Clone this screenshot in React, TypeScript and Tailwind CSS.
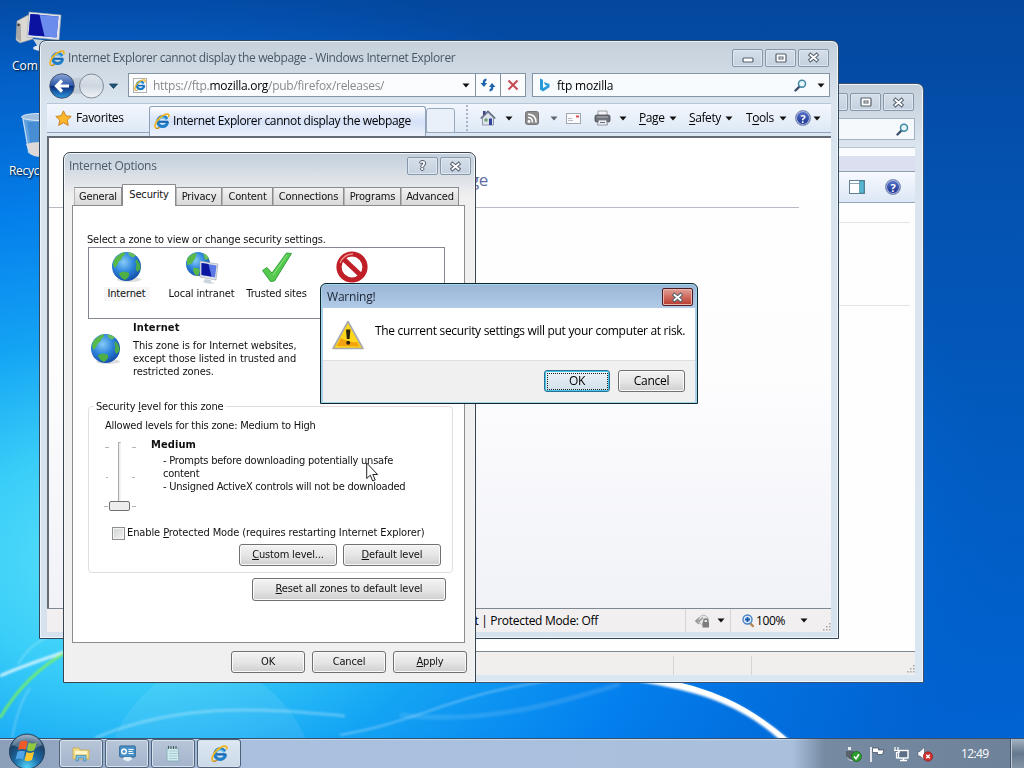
import type { ReactNode } from "react";
import clsx from "clsx";

const UI = "font-['Open_Sans','Noto_Sans',sans-serif] [font-stretch:normal]";
const TAHOMA = "font-['DejaVu_Sans_Condensed','DejaVu_Sans',sans-serif] [font-stretch:condensed]";

const ZONES = [
  { name: "Internet", icon: <Globe />, active: true },
  { name: "Local intranet", icon: <IntranetIcon />, active: false },
  { name: "Trusted sites", icon: <CheckMark />, active: false },
  { name: "Restricted sites", icon: <NoEntry />, active: false },
];

const TABS = [
  { name: "General", width: "w-[48px]" },
  { name: "Security", width: "w-[54px]" },
  { name: "Privacy", width: "w-[46px]" },
  { name: "Content", width: "w-[51px]" },
  { name: "Connections", width: "w-[71px]" },
  { name: "Programs", width: "w-[57px]" },
  { name: "Advanced", width: "w-[58px]" },
];

export default function App() {
  return (
    <div className={clsx("relative h-[768px] w-[1024px] overflow-hidden bg-[#0650ad] text-[12px] text-black", UI)}>
      <Wallpaper />

      <div className="absolute left-[15px] top-[10px]"><ComputerIcon /></div>
      <span className="absolute left-[12px] top-[58px] leading-4 text-white [text-shadow:1px_1px_2px_#000]">Computer</span>
      <div className="absolute left-[19px] top-[112px]"><BinIcon /></div>
      <span className="absolute left-[9px] top-[163px] tracking-[-0.3px] leading-4 text-white [text-shadow:1px_1px_2px_#000]">Recycle Bin</span>

      <ExplorerWindow />
      <BrowserWindow />
      <OptionsDialog />
      <WarningDialog />

      <svg className="absolute left-[366px] top-[462px]" width="13" height="21" viewBox="0 0 13 21">
        <path d="M.7 1v15.5l3.6-3.3 2.4 5.8 2.5-1.1-2.4-5.4h4.8z" fill="#fff" stroke="#222" />
      </svg>

      <Taskbar />
    </div>
  );
}

/* ---------- desktop ---------- */

function Wallpaper() {
  return (
    <svg className="absolute inset-0" width="1024" height="768" viewBox="0 0 1024 768">
      <defs>
        <linearGradient id="sky" x1="0" y1="0" x2="0" y2="1">
          <stop offset="0" stopColor="#04479f" />
          <stop offset=".25" stopColor="#0452b0" />
          <stop offset=".6" stopColor="#025bc0" />
          <stop offset="1" stopColor="#0064d4" />
        </linearGradient>
        <radialGradient id="glow" gradientUnits="userSpaceOnUse" cx="130" cy="560" r="880" gradientTransform="translate(0 185) scale(1 .67)">
          <stop offset="0" stopColor="#5fe3fb" />
          <stop offset=".2" stopColor="#38cdf8" />
          <stop offset=".38" stopColor="#14a4f4" />
          <stop offset=".6" stopColor="#0484f2" stopOpacity=".9" />
          <stop offset=".85" stopColor="#036fe0" stopOpacity=".5" />
          <stop offset="1" stopColor="#025fc8" stopOpacity="0" />
        </radialGradient>
        <filter id="soft"><feGaussianBlur stdDeviation="1" /></filter>
      </defs>
      <rect width="1024" height="768" fill="url(#sky)" />
      <rect width="1024" height="768" fill="url(#glow)" />
      <path d="M112 745C124 710 150 678 200 660C250 665 292 700 308 745Z" fill="#fff" opacity=".08" />
      <g fill="none" stroke="#fff" filter="url(#soft)">
        <path d="M0 676C22 666 42 660 70 650" strokeWidth="3" opacity=".75" />
        <path d="M18 664C28 648 38 641 50 636M12 738C16 716 22 700 30 688" strokeWidth="1.5" opacity=".3" />
        <path d="M0 718C14 694 36 668 70 650" stroke="#7df25a" strokeWidth="2.4" />
        <path d="M95 738C180 702 260 708 345 716" strokeWidth="3" opacity=".28" />
        <path d="M340 735C420 722 460 690 560 680" strokeWidth="2" opacity=".3" />
        <path d="M400 715C480 724 550 706 620 684" strokeWidth="5" opacity=".12" />
      </g>
      <path d="M640 676C705 686 748 704 792 742L782 742C745 708 705 692 640 682Z" fill="#fff" filter="url(#soft)" />
      <path d="M652 679C708 688 748 706 788 742" fill="none" stroke="#fff" strokeWidth="4" />
    </svg>
  );
}

function ComputerIcon() {
  return (
    <svg width="48" height="42" viewBox="0 0 48 42">
      <path d="M2 11l11-6 5 3v21L5 33 1 30z" fill="#d9d8d2" stroke="#8f9296" strokeWidth=".6" />
      <path d="M2 12v17l4 3V14z" fill="#a8a9a6" />
      <circle cx="3.5" cy="15" r="1.2" fill="#333" />
      <path d="M18 29l20 2-1 7-13 1z" fill="#c9d3dc" />
      <path d="M14 2l32 3-2 25-32-3z" fill="#e2e6ea" stroke="#9ba5b0" strokeWidth=".6" />
      <path d="M15.5 4l28 2.500-2 21-28-2.500z" fill="#1d35c9" />
      <path d="M23 5l20.500 1.500-2 21-12-1z" fill="#6b8ced" />
      <path d="M15.500 4l9 .800 5 21.500-16-1.300z" fill="#0b12a0" />
      <ellipse cx="27" cy="38" rx="9" ry="3" fill="#dfe6ec" />
    </svg>
  );
}

function BinIcon() {
  return (
    <svg width="42" height="48" viewBox="0 0 42 48">
      <path d="M3 5l6 36q12 8 23 0l6-36z" fill="#82b5e4" opacity=".75" />
      <path d="M8 10h24l-4 25H12z" fill="#3c85cf" opacity=".7" />
      <path d="M7 32q14-4 26 0l-2 10q-10 6-20 0z" fill="#ded9d8" />
      <ellipse cx="20.500" cy="5" rx="18" ry="3.500" fill="#9fbddd" stroke="#dfeaf5" />
      <path d="M4 7l6 34" stroke="#cfe2f5" />
    </svg>
  );
}

/* ---------- shared window parts ---------- */

function CaptionButton({ children, red }: { children: ReactNode; red?: boolean }) {
  return (
    <div
      className={clsx(
        "flex h-[18px] w-[31px] items-center justify-center rounded-[2px] border",
        red
          ? "border-[#4c1c22] bg-linear-to-b from-[#e0a097] via-[#cf6a5e] to-[#b8392d] shadow-[inset_0_0_0_1px_#e9b5ad]"
          : "border-[#8796a8] bg-linear-to-b from-[#d5dfe9] to-[#c5d1df] shadow-[inset_0_0_0_1px_#dfe8f0]"
      )}
    >
      {children}
    </div>
  );
}

function CloseGlyph() {
  return (
    <svg width="13" height="11" viewBox="0 0 13 11">
      <path d="M3.500 3l6 5M9.500 3l-6 5" stroke="#56616f" strokeWidth="3.800" strokeLinecap="square" />
      <path d="M3.500 3l6 5M9.500 3l-6 5" stroke="#fff" strokeWidth="1.900" strokeLinecap="square" />
    </svg>
  );
}

function MaxGlyph() {
  return (
    <svg width="12" height="10" viewBox="0 0 12 10">
      <rect x="1" y="1" width="10" height="8" rx="1" fill="#fff" stroke="#56616f" strokeWidth="1.200" />
      <rect x="4" y="4" width="4" height="2" fill="#fff" stroke="#56616f" />
    </svg>
  );
}

function MinGlyph() {
  return (
    <svg width="12" height="10" viewBox="0 0 12 10">
      <rect x="1" y="5" width="10" height="4" rx="1" fill="#fff" stroke="#56616f" strokeWidth="1.200" />
    </svg>
  );
}

function Arrow({ className = "text-[#111]" }: { className?: string }) {
  return (
    <svg className={className} width="8" height="5" viewBox="0 0 8 5">
      <path d="M.5.5h7L4 4.500z" fill="currentColor" />
    </svg>
  );
}

function Magnifier() {
  return (
    <svg width="13" height="13" viewBox="0 0 13 13">
      <path d="M1.500 11.500l4-4" stroke="#3c4f68" strokeWidth="2.400" strokeLinecap="round" />
      <circle cx="8" cy="4.800" r="3.500" fill="#e6f6fb" stroke="#3f87a3" strokeWidth="1.500" />
    </svg>
  );
}

function HelpBadge() {
  return (
    <span className="flex h-4 w-4 shrink-0 items-center justify-center rounded-full border border-[#7f8fb4] bg-linear-to-b from-[#5a77cb] to-[#1c2f8f] text-[11px] leading-none font-bold text-white shadow-[inset_0_0_0_1px_#a9b8e0]">
      ?
    </span>
  );
}

function Grip() {
  return (
    <svg width="9" height="9" viewBox="0 0 9 9" fill="#a5a5a5">
      <path d="M7 1h1.500v1.500H7zM4 4h1.500v1.500H4zM7 4h1.500v1.500H7zM1 7h1.500v1.500H1zM4 7h1.500v1.500H4zM7 7h1.500v1.500H7z" />
    </svg>
  );
}

function IELogo({ size = 16 }: { size?: number }) {
  return (
    <svg width={size} height={size} viewBox="0 0 16 16" fill="none">
      <circle cx="8.600" cy="8.600" r="4.900" stroke="#1f7fc9" strokeWidth="3.200" strokeDasharray="27.500 3.300" />
      <path d="M5 6.500q3.500-3.800 7 0" stroke="#71c9f2" strokeWidth="1.400" />
      <path d="M5 8.800h9" stroke="#1769b5" strokeWidth="2.200" />
      <path d="M2 15.200C-.8 13 3.500 4.800 9.500 2.200C13.500.3 15.800 1 14.600 4.200" stroke="#efb41f" strokeWidth="1.700" />
      <path d="M2 15.200C3 15.800 4.600 15 5.600 14.200" stroke="#c9870e" strokeWidth="1.200" />
    </svg>
  );
}

function PushButton({ children, className }: { children: ReactNode; className?: string }) {
  return (
    <div
      className={clsx(
        "flex h-[22px] shrink-0 items-center justify-center rounded-[3px] border border-[#707070] bg-linear-to-b from-[#f3f3f3] via-[#e6e6e6] to-[#cfcfcf] whitespace-nowrap shadow-[inset_0_0_0_1px_#fafafa]",
        className
      )}
    >
      <span>{children}</span>
    </div>
  );
}

/* ---------- background explorer window ---------- */

function ExplorerWindow() {
  return (
    <div className="absolute left-[124px] top-[83px] flex h-[600px] w-[800px] flex-col rounded-t-[7px] border border-[#3e536b] bg-linear-to-b from-[#c3ced9] via-[#dbe5ef] via-10% to-[#dae6f2] pr-[8px] pb-[7px] pl-[7px] shadow-[inset_0_0_0_1px_#eef4fa]">
      <div className="flex h-[34px] shrink-0 items-center justify-end gap-[2px] pt-[2px] pr-px">
        <CaptionButton><MinGlyph /></CaptionButton>
        <CaptionButton><MaxGlyph /></CaptionButton>
        <CaptionButton><CloseGlyph /></CaptionButton>
      </div>
      <div className="flex h-[22px] shrink-0 items-center justify-end border border-[#a3b3c3] bg-[#f6f9fc] pr-[5px]">
        <Magnifier />
      </div>
      <div className="mt-[7px] h-[9px] shrink-0 border-t border-[#b6c4d2] bg-[#fafbfe]" />
      <div className="h-[16px] shrink-0 border-b border-[#8f9fb2] bg-[#dcdff0]" />
      <div className="flex h-[31px] shrink-0 items-center justify-end border-b border-[#93a6bc] bg-linear-to-b from-[#f7faff] to-[#dce7f5] pr-[14px]">
        <svg className="mr-[20px]" width="16" height="14" viewBox="0 0 16 14">
          <rect x=".5" y=".5" width="15" height="13" fill="#fff" stroke="#5f7f97" />
          <path d="M1 3.500h10" stroke="#8ea6b8" />
          <path d="M10.500 1h4.500v12h-4.500z" fill="#57b6cf" stroke="#3f7f99" strokeWidth=".6" />
        </svg>
        <HelpBadge />
      </div>
      <div className="flex grow flex-col bg-[#fefefe] pr-[5px]">
        <div className="h-[20px] border-b border-[#e3e3e6]" />
        <div className="h-[83px] border-b border-[#e3e3e6]" />
      </div>
      <div className="flex h-[24px] shrink-0 items-end border-t border-[#7f8791] bg-[#f1efee]">
        <div className="h-[19px] w-[542px] border-r border-[#d6d3d1]" />
        <div className="h-[19px] w-[78px] border-r border-[#d6d3d1]" />
        <div className="ml-auto pb-[2px]"><Grip /></div>
      </div>
    </div>
  );
}

/* ---------- Internet Explorer ---------- */

function BrowserWindow() {
  return (
    <div className="absolute left-[39px] top-[40px] flex h-[599px] w-[800px] flex-col rounded-t-[7px] border border-[#33475c] bg-linear-to-b from-[#c5d0da] via-[#d9e4ee] via-10% to-[#d6e2ee] px-[7px] pb-[6px] shadow-[inset_0_0_0_1px_#edf4fa]">
      <div className="flex h-[32px] shrink-0 items-center pt-px pl-[2px] pr-[2px]">
        <IELogo />
        <span className="ml-[3px] tracking-[-0.37px] text-[#4a5766]">
          Internet Explorer cannot display the webpage - Windows Internet Explorer
        </span>
        <div className="ml-auto flex gap-[2px]">
          <CaptionButton><MinGlyph /></CaptionButton>
          <CaptionButton><MaxGlyph /></CaptionButton>
          <CaptionButton><CloseGlyph /></CaptionButton>
        </div>
      </div>

      <div className="flex h-[24px] shrink-0 items-center">
        <NavButtons />
        <div className="ml-[7px] flex h-[24px] w-[398px] shrink-0 items-center border border-[#8494a5] bg-[#fafcfe]">
          <span className="ml-[4px] flex h-[15px] w-[14px] items-center justify-center border border-[#b2b2b2] bg-white">
            <IELogo size={12} />
          </span>
          <span className="ml-[6px] pt-px tracking-[-0.27px] text-[#8a8a8a]">
            https://ftp.<span className="text-black">mozilla.org</span>/pub/firefox/releases/
          </span>
          <span className="mr-[5px] ml-auto"><Arrow /></span>
          <span className="flex h-full w-[25px] items-center justify-center border-l border-[#8494a5]">
            <svg width="16" height="14" viewBox="0 0 16 14" fill="#1e63ae">
              <path d="M6.500.5Q2.500.8 2.700 5H.5L4 9l3-4H5Q5 3 6.500 2.500z" />
              <path d="M9.500 13.500q4-.3 3.800-4.500h2.200L12 5 9 9h2q0 2-1.500 2.500z" />
            </svg>
          </span>
          <span className="flex h-full w-[25px] items-center justify-center border-l border-[#8494a5]">
            <svg width="12" height="12" viewBox="0 0 12 12">
              <path d="M1.500 1.500l9 9M10.500 1.500l-9 9" stroke="#c44a50" strokeWidth="2" />
            </svg>
          </span>
        </div>
        <div className="ml-[6px] flex h-[24px] w-[298px] shrink-0 items-center border border-[#8494a5] bg-[#f8fbfd]">
          <svg className="ml-[6px]" width="11" height="15" viewBox="0 0 11 15">
            <path d="M1 .5l3 1.200v8.300l4-2.300-2-.9L4.800 4 10.500 6v3.200L4 13.500 1 11.500z" fill="#2b9bd8" />
          </svg>
          <span className="ml-[7px] pt-px tracking-[-0.2px]">ftp mozilla</span>
          <span className="mr-[10px] ml-auto"><Magnifier /></span>
          <span className="mr-[4px]"><Arrow /></span>
        </div>
      </div>

      <div className="mt-[6px] flex h-[33px] shrink-0 border-t border-[#b7c6d6] bg-linear-to-b from-[#f3f7fd] to-[#dbe6f5]">
        <div className="flex h-[29px] w-[102px] shrink-0 items-center border-b border-[#93a4ba] pl-[8px]">
          <svg width="17" height="16" viewBox="0 0 17 16">
            <path d="M8.500.8l2.300 5 5.400.6-4 3.700 1.100 5.300-4.800-2.700-4.800 2.700 1.100-5.300-4-3.700 5.400-.6z" fill="#fcb72a" stroke="#c97a16" strokeWidth=".9" />
          </svg>
          <span className="ml-[4px] tracking-[-0.35px]">Favorites</span>
        </div>
        <div className="mt-[2px] flex h-[31px] w-[277px] shrink-0 items-center rounded-t-[3px] border border-b-0 border-[#8fa1b8] bg-linear-to-b from-[#fbfcff] via-[#d5e1f8] to-[#eef3fc] pb-[3px] pl-[4px]">
          <IELogo />
          <span className="ml-[3px] tracking-[-0.38px] whitespace-nowrap">Internet Explorer cannot display the webpage</span>
        </div>
        <div className="flex h-[29px] grow items-center border-b border-[#93a4ba]">
          <div className="mt-[4px] h-[25px] w-[29px] rounded-t-[3px] rounded-b-[2px] border border-[#98a9be] bg-[#e9f0fa]" />
          <div className="ml-[11px] h-[26px] border-l-2 border-dotted border-[#a8b3c3]" />
          <div className="ml-[12px] flex w-[33px] items-center justify-between"><HomeIcon /><Arrow /></div>
          <div className="ml-[12px] flex w-[33px] items-center justify-between">
            <svg width="14" height="14" viewBox="0 0 14 14">
              <rect x=".5" y=".5" width="13" height="13" rx="2" fill="#8c8c8c" stroke="#777" />
              <circle cx="4" cy="10.500" r="1.400" fill="#fff" />
              <path d="M3 6.500q4.500 0 4.500 5M3 3.200q8 0 8 8.300" fill="none" stroke="#fff" strokeWidth="1.500" />
            </svg>
            <Arrow className="text-[#5c646f]" />
          </div>
          <svg className="ml-[8px]" width="15" height="11" viewBox="0 0 15 11">
            <rect x=".5" y=".5" width="14" height="10" fill="#fbfbfb" stroke="#a2a7b4" />
            <path d="M10 2.500h3v2h-3z" fill="#d94c50" />
            <path d="M2 7.500h5M2 5.500h4" stroke="#b6bac6" />
          </svg>
          <div className="ml-[13px] flex w-[33px] items-center justify-between"><PrinterIcon /><Arrow /></div>
          <MenuItem className="ml-[12px] w-[38px]" hot="P" rest="age" />
          <MenuItem className="ml-[12px] w-[44px]" hot="S" rest="afety" />
          <MenuItem className="ml-[13px] w-[41px]" pre="T" hot="o" rest="ols" />
          <div className="ml-[8px] flex w-[26px] items-center justify-between"><HelpBadge /><Arrow /></div>
        </div>
      </div>

      <div className="flex grow border-t-2 border-l-2 border-[#646b75] bg-linear-to-b from-white via-[#fdfdfe] to-[#f1f2f8]">
        {/* error page heading, mostly behind the options dialog */}
        <div className="flex h-[70px] w-[750px] items-end justify-end border-b border-[#b9bbc4] pb-[15px] pr-[311px]">
          <span className="text-[17px] tracking-[-0.4px] text-[#5d6da0]">Internet Explorer cannot display the webpage</span>
        </div>
      </div>

      <div className="flex h-[24px] shrink-0 items-center border-t border-[#7f8791] bg-[#f1efef]">
        <div className="flex h-full w-[639px] items-center justify-end border-r border-[#d6d3d6] pr-[87px]">
          <span className="tracking-[-0.3px]">Internet | Protected Mode: Off</span>
        </div>
        <div className="flex h-full w-[45px] items-center justify-between border-r border-[#d6d3d6] pr-[5px] pl-[9px]">
          <svg width="15" height="14" viewBox="0 0 15 14">
            <circle cx="8.500" cy="6" r="4.800" fill="#e9e9e9" stroke="#b2b2b2" />
            <path d="M8 3.500L4.500 7H1M4 4L1 7l3 3" fill="none" stroke="#9a9a9a" strokeWidth="1.600" />
            <path d="M8.800 8.500V7a2 2 0 014 0v1.500" fill="none" stroke="#777" strokeWidth="1.300" />
            <rect x="7.500" y="8" width="6.500" height="5.500" fill="#7d7d7d" />
          </svg>
          <Arrow />
        </div>
        <svg className="ml-[11px]" width="13" height="14" viewBox="0 0 13 14">
          <path d="M8 9l3.500 3.800" stroke="#b58352" strokeWidth="2.400" />
          <circle cx="5.500" cy="5.500" r="4.500" fill="#dcecfb" stroke="#4a83c4" strokeWidth="1.400" />
          <path d="M5.500 3v5M3 5.500h5" stroke="#1757b0" strokeWidth="1.800" />
        </svg>
        <span className="ml-px w-[44px] tracking-[-0.4px]">100%</span>
        <Arrow />
        <div className="ml-auto self-end pb-[1px]"><Grip /></div>
      </div>
    </div>
  );
}

function NavButtons() {
  return (
    <svg className="mt-[1px] ml-[2px] -my-[2px] shrink-0" width="72" height="27" viewBox="0 0 72 27">
      <defs>
        <linearGradient id="back" x1="0" y1="0" x2="0" y2="1">
          <stop offset="0" stopColor="#8ea7d8" />
          <stop offset=".48" stopColor="#2c56a8" />
          <stop offset=".52" stopColor="#0d2c7d" />
          <stop offset="1" stopColor="#2c9be0" />
        </linearGradient>
        <linearGradient id="fwd" x1="0" y1="0" x2="0" y2="1">
          <stop offset="0" stopColor="#dfe5ec" />
          <stop offset=".5" stopColor="#cdd6e0" />
          <stop offset="1" stopColor="#f1f5f9" />
        </linearGradient>
      </defs>
      <path d="M13 3q14 4 29 0v20q-15-5-29 0z" fill="#c1ccd8" />
      <circle cx="13" cy="13" r="12.200" fill="url(#back)" stroke="#41526f" />
      <circle cx="42.500" cy="13" r="12" fill="url(#fwd)" stroke="#7e8a98" />
      <path d="M20 13H8M13 7.500L7.500 13l5.500 5.500" fill="none" stroke="#fff" strokeWidth="3.200" />
      <path d="M60.500 11h8l-4 4.500z" fill="#1e5779" stroke="#123c5a" strokeWidth=".8" />
    </svg>
  );
}

function HomeIcon() {
  return (
    <svg width="16" height="16" viewBox="0 0 16 16">
      <path d="M3 1h2.500v4H3z" fill="#3b3b86" />
      <path d="M2.500 8v7h11V8L8 2.500z" fill="#dfe3ee" stroke="#7c8597" strokeWidth=".8" />
      <path d="M.7 8.500L8 1.300l7.300 7.200" fill="none" stroke="#5d6883" strokeWidth="1.500" />
      <path d="M9 8.500h3V15H9z" fill="#3442a0" />
      <path d="M4.500 8.500h3v3h-3z" fill="#6ea06a" />
    </svg>
  );
}

function PrinterIcon() {
  return (
    <svg width="17" height="16" viewBox="0 0 17 16">
      <path d="M4 1h9v5H4z" fill="#f5f5f5" stroke="#888" strokeWidth=".8" />
      <rect x="1" y="5" width="15" height="7" rx="1.500" fill="#6d7177" stroke="#484c52" strokeWidth=".8" />
      <path d="M3 7h11" stroke="#b8bcc2" />
      <path d="M4.500 10h8l1 5h-10z" fill="#eef2f6" stroke="#7b828b" strokeWidth=".8" />
      <path d="M6 12.500h5" stroke="#5e6b7a" />
    </svg>
  );
}

function MenuItem({ pre, hot, rest, className }: { pre?: string; hot: string; rest: string; className?: string }) {
  return (
    <div className={clsx("flex items-center justify-between tracking-[-0.4px]", className)}>
      <span>{pre}<u className="underline-offset-2">{hot}</u>{rest}</span>
      <Arrow />
    </div>
  );
}

/* ---------- Internet Options ---------- */

function OptionsDialog() {
  return (
    <div className={clsx("absolute left-[63px] top-[152px] flex h-[531px] w-[413px] flex-col rounded-t-[7px] border border-[#3a444e] bg-[#f0f0f0] bg-linear-to-b from-[#c2cfdc] to-[#f0f0f0] to-[44px] text-[11px] tracking-[-0.16px] text-[#111] shadow-[inset_0_0_0_1px_#f4f7fa]", TAHOMA)}>
      <div className="flex h-[31px] shrink-0 items-start pt-[4px] pr-[4px] pl-[5px]">
        <span className={clsx("text-[12px] leading-[18px] tracking-[-0.3px] text-[#4c5a69]", UI)}>Internet Options</span>
        <div className="ml-auto flex gap-[2px]">
          <CaptionButton>
            <span className="text-[12px] leading-none font-bold text-white [text-shadow:1px_0_#4d5866,-1px_0_#4d5866,0_1px_#4d5866,0_-1px_#4d5866]">?</span>
          </CaptionButton>
          <CaptionButton><CloseGlyph /></CaptionButton>
        </div>
      </div>

      <div className="flex h-[21px] shrink-0 items-end pl-[10px]">
        {TABS.map((t) => (
          <div
            key={t.name}
            className={clsx(
              "flex shrink-0 items-center justify-center border border-b-0 border-[#8a8c90]",
              t.width,
              t.name === "Security"
                ? "relative z-10 -mb-px h-[22px] bg-white pb-px"
                : "h-[18px] border-l-[#b5b5b5] bg-linear-to-b from-[#f2f2f2] to-[#d9d9d9] pt-px"
            )}
          >
            {t.name}
          </div>
        ))}
      </div>

      <div className="ml-[8px] h-[438px] w-[393px] shrink-0 border border-[#8a8c90] bg-white pt-[27px]">
        <p className="ml-[14px] h-[14px] leading-[14px]">Select a zone to view or change security settings.</p>
        <div className="ml-[15px] flex h-[72px] w-[357px] overflow-hidden border border-[#828790] bg-white pt-[3px]">
          {ZONES.map((z) => (
            <div key={z.name} className="flex w-[75px] shrink-0 flex-col items-center text-center">
              <div className="h-[36px]">{z.icon}</div>
              <span
                className={clsx(
                  "px-1 leading-[14px]",
                  z.active && "bg-[#f6f6f6]",
                  z.name === "Restricted sites" ? "w-[62px]" : "whitespace-nowrap"
                )}
              >
                {z.name}
              </span>
            </div>
          ))}
        </div>

        <div className="flex h-[87px] pt-[2px] pl-[17px]">
          <div className="mt-[12px] w-[43px] shrink-0"><Globe /></div>
          <div>
            <p className="leading-[14px] font-bold tracking-[0.12px]">Internet</p>
            <p className="mt-[4px] w-[190px] leading-[13px] tracking-[-0.1px]">
              This zone is for Internet websites,<br />except those listed in trusted and<br />restricted zones.
            </p>
          </div>
        </div>

        <div className="ml-[15px] h-[167px] w-[365px] rounded-[4px] border border-[#dfdfe2]">
          <p className="-mt-[7px] ml-[5px] h-[14px] w-fit bg-white px-[2px] leading-[14px]">Security <u>l</u>evel for this zone</p>
          <p className="mt-[5px] ml-[16px] h-[19px] leading-[14px] tracking-[-0.22px]">Allowed levels for this zone: Medium to High</p>
          <div className="flex h-[88px]">
            <svg className="mt-[3px] ml-[15px]" width="32" height="74" viewBox="0 0 32 74">
              <path d="M1 6.500h4M28 6.500h4M2 36.500h2M28 36.500h3M0 65.500h4M28 65.500h4" stroke="#b5b5b5" />
              <path d="M14.500 1.500h2v60h-2z" fill="#eee" stroke="#aaa" />
              <path d="M16.500 2v60" stroke="#f4f4f4" />
              <rect x="5.500" y="60.500" width="20" height="9" rx="1.500" fill="#ededed" stroke="#707070" />
            </svg>
            <div className="ml-[15px]">
              <p className="leading-[14px] font-bold tracking-[0.1px]">Medium</p>
              <p className="mt-[2px] ml-[12px] leading-[13px] tracking-[-0.23px] whitespace-nowrap">
                - Prompts before downloading potentially unsafe<br />content<br />- Unsigned ActiveX controls will not be downloaded
              </p>
            </div>
          </div>
          <div className="ml-[23px] flex h-[14px] items-center gap-[2px]">
            <span className="h-[13px] w-[13px] shrink-0 border border-[#8e8f8f] bg-linear-to-br from-[#cfd0d2] to-[#f4f4f4] shadow-[inset_0_0_0_1px_#f4f4f4]" />
            <span className="tracking-[-0.1px] whitespace-nowrap">Enable <u>P</u>rotected Mode (requires restarting Internet Explorer)</span>
          </div>
          <div className="mt-[4px] flex justify-end gap-[6px] pr-[11px]">
            <PushButton className="w-[98px]"><u>C</u>ustom level...</PushButton>
            <PushButton className="w-[98px]"><u>D</u>efault level</PushButton>
          </div>
        </div>

        <div className="mt-[5px] flex justify-end pr-[18px]">
          <PushButton className="h-[23px] w-[194px]"><u>R</u>eset all zones to default level</PushButton>
        </div>
      </div>

      <div className="flex gap-[7px] pt-[8px] pl-[167px]">
        <PushButton className="w-[74px]">OK</PushButton>
        <PushButton className="w-[74px]">Cancel</PushButton>
        <PushButton className="w-[74px]"><u>A</u>pply</PushButton>
      </div>
    </div>
  );
}

function Globe() {
  return (
    <svg width="32" height="32" viewBox="0 0 32 32">
      <defs>
        <radialGradient id="sea" cx=".4" cy=".35" r=".7">
          <stop offset="0" stopColor="#86cbf7" />
          <stop offset=".5" stopColor="#2f86dc" />
          <stop offset="1" stopColor="#1149a6" />
        </radialGradient>
      </defs>
      <ellipse cx="18" cy="28.500" rx="12" ry="2.500" fill="#bbb" opacity=".5" />
      <circle cx="15.500" cy="15.500" r="14.500" fill="url(#sea)" />
      <path d="M3 9q4-6 11-8 0 4-3 5 0 3-3 4-2 5-4 7-3-2-1-8z" fill="#58b947" />
      <path d="M8 22q5-3 10 0 1 4-4 7-5-2-6-7z" fill="#4eb044" />
      <path d="M25 8q5 4 4.500 10l-3 3q-3-4-1-7-2-3-.5-6z" fill="#4bab4a" />
      <path d="M17 1.500q5 0 8 3l-3 2q-4-1-5-5z" fill="#66bd5c" />
    </svg>
  );
}

function IntranetIcon() {
  return (
    <svg width="34" height="34" viewBox="0 0 34 34">
      <circle cx="13" cy="13" r="12" fill="url(#sea)" />
      <path d="M2 8q4-6 10-6l-2 6-4 5-4 1zM8 17q4-1 7 2l-2 6q-5-1-5-8z" fill="#58b947" />
      <path d="M18 2q5 2 6 6l-4 1z" fill="#66bd5c" />
      <path d="M15 10l18 3-2 16-16-3z" fill="#e2e5e9" stroke="#9aa3ad" strokeWidth=".6" />
      <path d="M16.500 12l15 2.500-1.500 12-13.500-2.500z" fill="#5b78e6" />
      <path d="M16.500 12l7 1 3 12.500-10-1.500z" fill="#0c16a0" />
      <path d="M20 28l6 1v2l4 1q-6 2-12-1z" fill="#cdd5dc" />
    </svg>
  );
}

function CheckMark() {
  return (
    <svg width="32" height="32" viewBox="0 0 32 32">
      <path d="M1.500 19.500l4.500-3 5 5.500L25.500 2l5 .5-17 27.500-4 .5z" fill="#55c94d" stroke="#2c9a34" strokeWidth=".9" />
      <path d="M12 24L26 4" stroke="#8fe484" />
    </svg>
  );
}

function NoEntry() {
  return (
    <svg width="32" height="32" viewBox="0 0 32 32" fill="none">
      <circle cx="16" cy="16" r="13" fill="#fff" stroke="#c01f28" strokeWidth="5.200" />
      <path d="M7 7.500l18 17" stroke="#c01f28" strokeWidth="5" />
      <path d="M4 12q4-9 13-9" stroke="#ee8a8c" strokeWidth="1.300" />
    </svg>
  );
}

/* ---------- Warning ---------- */

function WarningDialog() {
  return (
    <div className="absolute left-[320px] top-[283px] flex h-[121px] w-[378px] flex-col rounded-t-[6px] border border-[#10232f] bg-linear-to-b from-[#9ab5d6] to-[#b3cdea] to-[26px] p-px shadow-[inset_0_0_0_1px_#9fd8e8]">
      <div className="flex h-[23px] shrink-0 items-center pt-px pr-[3px] pl-[5px]">
        <span className="tracking-[-0.2px] text-[#1c2433]">Warning!</span>
        <div className="ml-auto"><CaptionButton red><CloseGlyph /></CaptionButton></div>
      </div>
      <div className="mx-px flex h-[52px] shrink-0 bg-white pl-[9px]">
        <svg className="mt-[12px] shrink-0" width="32" height="31" viewBox="0 0 32 31">
          <path d="M16 1.500L31 28.500H1z" fill="#fbd21a" stroke="#a7aab0" strokeWidth="1.600" strokeLinejoin="round" />
          <path d="M16 4.500L28.500 27h-25z" fill="#ffd81e" />
          <path d="M4.500 26L9 18q9 5 16 4l2.500 4.500z" fill="#f3a312" />
          <path d="M14 9.500h4.400l-.8 9.500h-2.800z" fill="#2a240f" />
          <circle cx="16.200" cy="22.800" r="2" fill="#2a240f" />
        </svg>
        <span className="mt-[14px] ml-[11px] leading-[18px] tracking-[-0.31px] whitespace-nowrap">
          The current security settings will put your computer at risk.
        </span>
      </div>
      <div className="mx-px flex grow justify-end gap-[8px] border-t border-[#dfdfdf] bg-[#f0f0f0] pt-[9px] pr-[10px] tracking-[-0.3px]">
        <div className="flex h-[22px] w-[66px] items-center justify-center rounded-[3px] border border-[#2c6f94] bg-linear-to-b from-[#eef5f9] to-[#cfdfe8] shadow-[inset_0_0_0_1px_#47c5ea]">
          <span className="flex h-[17px] w-[61px] items-center justify-center border border-dotted border-[#222]">OK</span>
        </div>
        <PushButton className="w-[67px]">Cancel</PushButton>
      </div>
    </div>
  );
}

/* ---------- taskbar ---------- */

function Taskbar() {
  return (
    <div className="absolute inset-x-0 bottom-0 flex h-[30px] border-t border-[#37506c] bg-linear-to-r from-[#8c9fb9] from-0% via-[#a9c0de] via-24% to-[#a9c0dd] shadow-[inset_0_1px_0_#c7d6e8]">
      <div className="-mt-[6px] w-[59px] pl-[8px]"><StartOrb /></div>
      <div className="flex gap-[2px]">
        <TaskButton>
          <svg width="18" height="16" viewBox="0 0 18 16">
            <path d="M1 2h6l1 2h9v9H1z" fill="#f1dc8a" stroke="#c9a94a" strokeWidth=".8" />
            <path d="M3 5h12v3H3z" fill="#fdf6cd" />
            <path d="M4 15V9.500h10V15h-2.500v-3h-5v3z" fill="#7cc0e6" stroke="#3c86b6" strokeWidth=".7" />
          </svg>
        </TaskButton>
        <TaskButton>
          <svg width="17" height="17" viewBox="0 0 17 17">
            <rect x=".7" y="1" width="15.600" height="11" rx="1" fill="#4a94cb" stroke="#2b6597" />
            <circle cx="5" cy="6.500" r="2.300" fill="none" stroke="#fff" strokeWidth="1.400" />
            <path d="M9.500 4.500h5M9.500 6.500h4M9.500 8.500h5" stroke="#fff" />
            <path d="M5 12h7l1 2.500-4 2-5-2z" fill="#e6edf3" />
          </svg>
        </TaskButton>
        <TaskButton>
          <svg width="14" height="18" viewBox="0 0 14 18">
            <path d="M1 3h11l1 13H1z" fill="#d0e9ec" stroke="#80a9b4" strokeWidth=".8" />
            <path d="M3 6h8M3 8.500h8M3 11h8M3 13.500h8" stroke="#a5cdd3" />
            <path d="M2.500 1v3M5 1v3M7.500 1v3M10 1v3" stroke="#48575e" />
          </svg>
        </TaskButton>
        <TaskButton active><IELogo size={17} /></TaskButton>
      </div>
      <div className="ml-auto flex w-[232px] items-center bg-linear-to-r from-transparent via-[#768aa2] via-14% to-[#6d8199] pl-[53px]">
        <svg width="17" height="16" viewBox="0 0 17 16">
          <path d="M3 1h3v3H3z" fill="#e7e9ec" />
          <path d="M1 5h8v5l-2 3H4L1 10z" fill="#59616b" />
          <path d="M2.500 12q2 3 5 2.500" stroke="#cfd4d9" fill="none" />
          <circle cx="11.500" cy="10.500" r="5" fill="#2f9d2f" stroke="#16631a" strokeWidth=".7" />
          <path d="M9 10.500l2 2.200 3-4.500" fill="none" stroke="#fff" strokeWidth="1.600" />
        </svg>
        <svg className="ml-[7px]" width="17" height="16" viewBox="0 0 17 16">
          <path d="M2 1v15" stroke="#fff" strokeWidth="1.600" />
          <path d="M3.500 2h6v2h5.500l-1.500 4.500H8.500v-2h-5z" fill="#fff" stroke="#3a4654" strokeWidth=".7" />
        </svg>
        <svg className="ml-[7px]" width="17" height="16" viewBox="0 0 17 16" fill="none" stroke="#fff">
          <rect x="5.500" y="4.500" width="9.500" height="7.500" fill="#5c6f86" strokeWidth="1.400" />
          <path d="M7 14.500h7M10.500 12v2" strokeWidth="1.500" />
          <path d="M2 1v3M5 1v3M1 4.500h5v2H3.500V12H5" strokeWidth="1.200" />
        </svg>
        <svg className="ml-[7px]" width="17" height="16" viewBox="0 0 17 16">
          <path d="M1 5.500h2L7.500 1v13L3 10H1z" fill="#fff" stroke="#4a5868" strokeWidth=".6" />
          <circle cx="11" cy="10.500" r="4.700" fill="#d02f2c" stroke="#8c1918" strokeWidth=".6" />
          <path d="M9.200 8.700l3.600 3.600M12.800 8.700l-3.600 3.600" stroke="#fff" strokeWidth="1.500" />
        </svg>
        <span className="ml-[27px] tracking-[-0.6px] text-white">12:49</span>
        <div className="ml-auto h-full w-[14px] border-l border-[#46566a] bg-linear-to-b from-[#a5b3c2] via-[#65788d] to-[#8495a8] shadow-[inset_1px_0_0_#bccad8]" />
      </div>
    </div>
  );
}

function TaskButton({ children, active }: { children: ReactNode; active?: boolean }) {
  return (
    <div
      className={clsx(
        "flex h-[29px] w-[44px] items-center justify-center rounded-[3px] border border-[#4f6079] shadow-[inset_0_0_0_1px_#d7e2ef]",
        active ? "bg-linear-to-b from-[#dde8f3] to-[#cbd9e8]" : "bg-linear-to-b from-[#b8c6d9] to-[#a4b4cb]"
      )}
    >
      {children}
    </div>
  );
}

function StartOrb() {
  return (
    <svg width="38" height="36" viewBox="0 0 38 36">
      <defs>
        <radialGradient id="orb" cx=".5" cy=".95" r=".95">
          <stop offset="0" stopColor="#4fd3f8" />
          <stop offset=".4" stopColor="#1b6ba6" />
          <stop offset=".75" stopColor="#1c4268" />
          <stop offset="1" stopColor="#8ba6bf" />
        </radialGradient>
      </defs>
      <circle cx="19" cy="18.500" r="17.500" fill="url(#orb)" stroke="#23405c" />
      <path d="M4 12Q9 2 19 2t15 10q-8 5-15 4T4 12z" fill="#fff" opacity=".25" />
      <path d="M12 9q4-2.500 7.500-.3L17.500 17q-3.500-2-7.500.2z" fill="#ee5a28" />
      <path d="M20.800 9.500q4 2 8-.3L26.500 17q-4 2.200-7.500.3z" fill="#90c83f" />
      <path d="M9.500 18.800q4-2.200 7.600-.2L15 26.500q-3.500-2-7.500.2z" fill="#4fa5e8" />
      <path d="M18.600 19q4 2 7.500-.2L24 27q-4 2-7.500.2z" fill="#fdc82f" />
    </svg>
  );
}
